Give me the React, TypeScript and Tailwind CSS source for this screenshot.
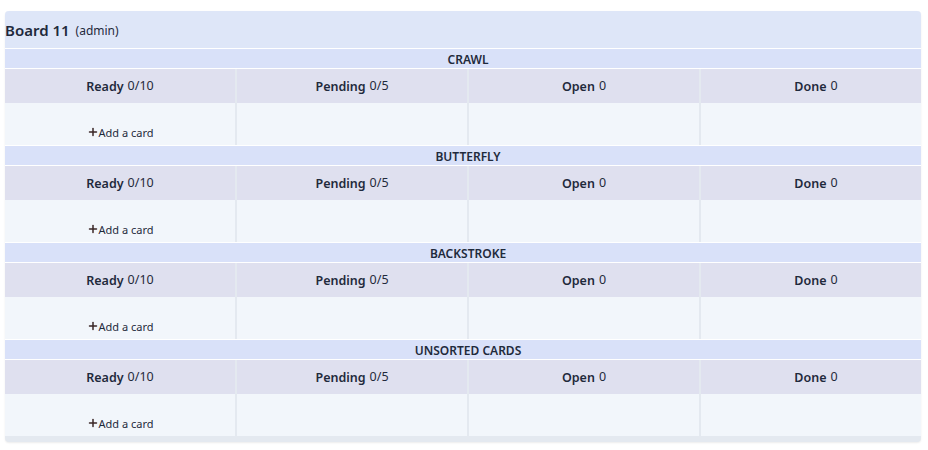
import { Plus } from 'lucide-react';

const lanes = ['Crawl', 'Butterfly', 'Backstroke', 'Unsorted cards'];

const columns = [
  { name: 'Ready', count: '0/10' },
  { name: 'Pending', count: '0/5' },
  { name: 'Open', count: '0' },
  { name: 'Done', count: '0' },
];

function Lane({ title }: { title: string }) {
  return (
    <div>
      {/* lane title */}
      <div className="mt-px flex h-[19px] items-center justify-center bg-[#d9e1f9] pt-[2px] text-[12px] font-semibold uppercase leading-none text-[#1f2a3c]">
        {title}
      </div>
      {/* column heads + bodies */}
      <div className="mt-px grid grid-cols-4 gap-x-[2px] bg-[#e4e9f0]">
        {columns.map((col) => (
          <div key={col.name} className="flex h-[34px] items-center justify-center gap-1 bg-[#dfe0ef] pt-[3px] text-[12.5px] text-[#1f2a3c]">
            <span className="font-semibold">{col.name}</span>
            <span className="relative -top-[1px]">{col.count}</span>
          </div>
        ))}
        {columns.map((col, i) => (
          <div key={col.name + '-body'} className="flex h-[42px] items-end justify-center bg-[#f2f6fb] pb-[7px]">
            {i === 0 && (
              <button className="flex items-center text-[11px] leading-none text-[#1f2a3c]">
                <Plus size={12} strokeWidth={3} className="text-[#3a2626]" />
                Add a card
              </button>
            )}
          </div>
        ))}
      </div>
    </div>
  );
}

export default function App() {
  return (
    <div className="min-h-[450px] bg-white pt-[11px] pl-[5px]" style={{ fontFamily: '"Noto Sans", "Open Sans", sans-serif' }}>
      <div className="w-[916px] overflow-hidden rounded-[4px] bg-[#e4e9f0] pb-[6px] shadow-[0_1px_2px_rgba(0,0,0,0.08)]">
        <div className="w-[926px] bg-white">
          <div className="flex h-[37px] items-center gap-[6px] bg-[#dee6f8] pt-[2px] text-[#1f2a3c]">
            <span className="text-[15px] font-semibold">Board 11</span>
            <span className="text-[12px]">(admin)</span>
          </div>
          {lanes.map((lane) => (
            <Lane key={lane} title={lane} />
          ))}
        </div>
      </div>
    </div>
  );
}
